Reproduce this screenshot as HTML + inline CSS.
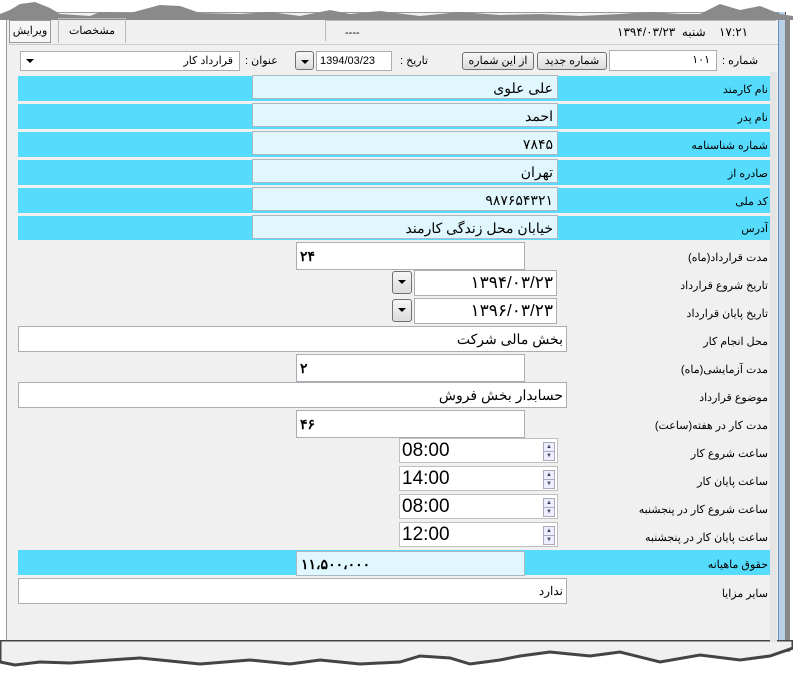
<!DOCTYPE html>
<html><head><meta charset="utf-8"><style>
body{margin:0;width:793px;height:677px;background:#fff;position:relative;overflow:hidden;font-family:"Liberation Sans","Noto Sans CJK SC",sans-serif;font-size:11px;color:#000}
.a{position:absolute}
.win{left:6px;top:12px;width:774px;height:632px;background:#f0f0f0;border:1px solid #999}
.rb{left:778px;top:12px;width:6px;height:635px;background:#b8cfe8;border-left:1px solid #6d8fb8;border-right:1px solid #555}
.sh{left:785px;top:20px;width:5px;height:632px;background:#888}
.cy{background:#55dbfb}
.in{background:#dff7fd;border:1px solid #a9b8c2;box-sizing:border-box;direction:rtl;padding:0 4px;font-size:14px;line-height:24px}
.wb{background:#fff;border:1px solid #abadb3;box-sizing:border-box;direction:rtl;padding:0 3px;font-size:13px;line-height:24px}
.lb{direction:rtl;text-align:right;right:25px;font-size:11px}
.btn{background:linear-gradient(#f6f6f6,#dcdcdc);border:1px solid #707070;border-radius:3px;box-sizing:border-box;text-align:center;font-size:11px;line-height:16px}
.dd{background:linear-gradient(#f6f6f6,#dcdcdc);border:1px solid #707070;border-radius:3px;box-sizing:border-box}
.dd:after{content:"";position:absolute;left:5px;top:8px;border:4px solid transparent;border-top:4px solid #000}
.tm{background:#fff;border:1px solid #c0c0c0;box-sizing:border-box;font-size:19px;line-height:24px;padding-left:2px}
.sp{right:2px;width:12px;height:10px;border:1px solid #aab;background:#eef;box-sizing:border-box;font-size:6px;line-height:8px;text-align:center;color:#446}
</style></head><body>
<div class="a win"></div>
<div class="a rb"></div>
<div class="a sh"></div>
<svg class="a" style="left:0;top:0" width="793" height="20"><path d="M0 20 L0 14 L10 10 L20 4 L35 2 L50 8 L60 14 L90 16 L100 12 L130 13 L160 5 L180 6 L200 13 L240 14 L270 12 L300 16 L330 10 L350 14 L380 11 L420 16 L460 12 L500 15 L540 14 L580 16 L620 14 L650 12 L680 14 L700 14 L720 4 L740 10 L760 6 L780 14 L793 16 L793 20Z" fill="#8a8a8a"/></svg>
<svg class="a" style="left:0;top:640" width="793" height="37"><path d="M0 0 L793 0 L793 8 L770 16 L740 20 L700 15 L660 22 L620 12 L590 16 L550 12 L520 16 L500 20 L470 24 L450 18 L420 16 L400 22 L360 24 L320 20 L290 24 L250 20 L200 24 L140 18 L110 20 L70 23 L40 22 L15 25 L0 22Z" fill="#f0f0f0" stroke="#444" stroke-width="3"/></svg>
<div class="a" style="left:9px;top:20px;width:40px;height:21px;border:1px solid #999;background:#f6f6f6;font-size:11px;text-align:center;line-height:21px">ویرایش</div>
<div class="a" style="left:58px;top:18px;width:66px;height:24px;border:1px solid #bbb;border-bottom:none;text-align:center;line-height:24px;font-size:11px">مشخصات</div>
<div class="a" style="left:325px;top:20px;width:450px;height:20px;border-top:1px solid #bbb;border-left:1px solid #bbb"></div>
<div class="a" style="left:345px;top:27px;font-size:11px">----</div>
<div class="a" style="left:617px;top:25px;font-size:12px;direction:rtl">۱۷:۲۱ &nbsp;&nbsp; شنبه &nbsp;۱۳۹۴/۰۳/۲۳</div>
<div class="a" style="left:8px;top:44px;width:770px;border-top:1px solid #ccc"></div>
<div class="a wb" style="left:20px;top:51px;width:220px;height:20px;line-height:18px;font-size:11px;padding-right:6px">قرارداد کار</div>
<div class="a" style="left:26px;top:59px;border:4px solid transparent;border-top:4px solid #000"></div>
<div class="a" style="left:245px;top:54px;font-size:11px;direction:rtl">عنوان :</div>
<div class="a dd" style="left:295px;top:51px;width:19px;height:19px"></div>
<div class="a wb" style="left:316px;top:51px;width:76px;height:20px;line-height:18px;direction:ltr;font-size:11px">1394/03/23</div>
<div class="a" style="left:400px;top:54px;font-size:11px;direction:rtl">تاریخ :</div>
<div class="a btn" style="left:462px;top:52px;width:72px;height:18px">از این شماره</div>
<div class="a btn" style="left:537px;top:52px;width:70px;height:18px">شماره جدید</div>
<div class="a wb" style="left:609px;top:50px;width:108px;height:21px;line-height:19px;font-size:11px;padding-right:6px">۱۰۱</div>
<div class="a" style="left:722px;top:54px;font-size:11px;direction:rtl">شماره :</div>
<div class="a" style="left:770px;top:72px;width:7px;height:570px;background:#e4e4e4"></div>
<div class="a cy" style="left:18px;top:76px;width:752px;height:25px"></div>
<div class="a cy" style="left:18px;top:104px;width:752px;height:25px"></div>
<div class="a cy" style="left:18px;top:132px;width:752px;height:25px"></div>
<div class="a cy" style="left:18px;top:160px;width:752px;height:25px"></div>
<div class="a cy" style="left:18px;top:188px;width:752px;height:25px"></div>
<div class="a cy" style="left:18px;top:216px;width:752px;height:24px"></div>
<div class="a cy" style="left:18px;top:550px;width:752px;height:25px"></div>
<div class="a in" style="left:252px;top:75px;width:306px;height:24px">علی علوی</div>
<div class="a in" style="left:252px;top:103px;width:306px;height:24px">احمد</div>
<div class="a in" style="left:252px;top:131px;width:306px;height:24px">۷۸۴۵</div>
<div class="a in" style="left:252px;top:159px;width:306px;height:24px">تهران</div>
<div class="a in" style="left:252px;top:187px;width:306px;height:24px">۹۸۷۶۵۴۳۲۱</div>
<div class="a in" style="left:252px;top:215px;width:306px;height:24px">خیابان محل زندگی کارمند</div>
<div class="a lb" style="top:83px">نام کارمند</div>
<div class="a lb" style="top:111px">نام پدر</div>
<div class="a lb" style="top:139px">شماره شناسنامه</div>
<div class="a lb" style="top:167px">صادره از</div>
<div class="a lb" style="top:195px">کد ملی</div>
<div class="a lb" style="top:222px">آدرس</div>
<div class="a lb" style="top:251px">مدت قرارداد(ماه)</div>
<div class="a lb" style="top:279px">تاریخ شروع قرارداد</div>
<div class="a lb" style="top:307px">تاریخ پایان قرارداد</div>
<div class="a lb" style="top:335px">محل انجام کار</div>
<div class="a lb" style="top:363px">مدت آزمایشی(ماه)</div>
<div class="a lb" style="top:391px">موضوع قرارداد</div>
<div class="a lb" style="top:419px">مدت کار در هفته(ساعت)</div>
<div class="a lb" style="top:447px">ساعت شروع کار</div>
<div class="a lb" style="top:475px">ساعت پایان کار</div>
<div class="a lb" style="top:503px">ساعت شروع کار در پنجشنبه</div>
<div class="a lb" style="top:531px">ساعت پایان کار در پنجشنبه</div>
<div class="a lb" style="top:558px">حقوق ماهیانه</div>
<div class="a lb" style="top:587px">سایر مزایا</div>
<div class="a wb" style="left:296px;top:242px;width:229px;height:28px;direction:ltr;font-weight:bold;font-size:14px;line-height:26px">۲۴</div>
<div class="a dd" style="left:392px;top:271px;width:20px;height:23px"></div>
<div class="a wb" style="left:414px;top:270px;width:143px;height:26px;font-size:17px;letter-spacing:1px">۱۳۹۴/۰۳/۲۳</div>
<div class="a dd" style="left:392px;top:299px;width:20px;height:23px"></div>
<div class="a wb" style="left:414px;top:298px;width:143px;height:26px;font-size:17px;letter-spacing:1px">۱۳۹۶/۰۳/۲۳</div>
<div class="a wb" style="left:18px;top:326px;width:549px;height:26px;font-size:14px">بخش مالی شرکت</div>
<div class="a wb" style="left:296px;top:354px;width:229px;height:28px;direction:ltr;font-weight:bold;font-size:14px;line-height:26px">۲</div>
<div class="a wb" style="left:18px;top:382px;width:549px;height:26px;font-size:14px">حسابدار بخش فروش</div>
<div class="a wb" style="left:296px;top:410px;width:229px;height:28px;direction:ltr;font-weight:bold;font-size:14px;line-height:26px">۴۶</div>
<div class="a tm" style="left:399px;top:438px;width:159px;height:25px">08:00<div class="a sp" style="top:3px">▲</div><div class="a sp" style="top:12px">▼</div></div>
<div class="a tm" style="left:399px;top:466px;width:159px;height:25px">14:00<div class="a sp" style="top:3px">▲</div><div class="a sp" style="top:12px">▼</div></div>
<div class="a tm" style="left:399px;top:494px;width:159px;height:25px">08:00<div class="a sp" style="top:3px">▲</div><div class="a sp" style="top:12px">▼</div></div>
<div class="a tm" style="left:399px;top:522px;width:159px;height:25px">12:00<div class="a sp" style="top:3px">▲</div><div class="a sp" style="top:12px">▼</div></div>
<div class="a in" style="left:296px;top:551px;width:229px;height:25px;direction:ltr;font-weight:bold;font-size:14px;letter-spacing:2px">۱۱،۵۰۰،۰۰۰</div>
<div class="a wb" style="left:18px;top:578px;width:549px;height:26px;font-size:12px">ندارد</div>
</body></html>
